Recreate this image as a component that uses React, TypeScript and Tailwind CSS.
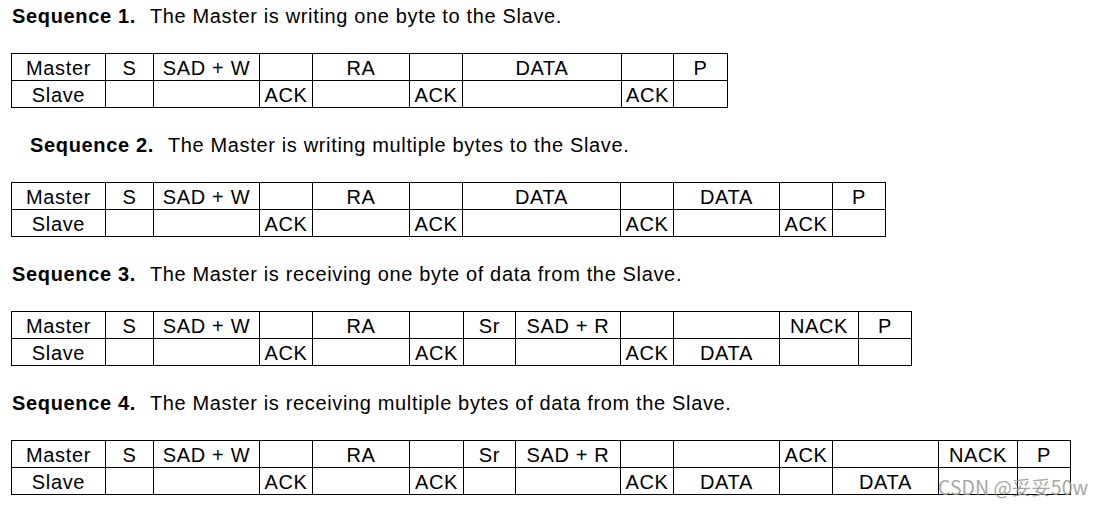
import React from 'react'

type Col = [number, string, string]

interface Seq {
  n: number
  title: string
  indent: string
  cols: Col[]
}

const SEQUENCES: Seq[] = [
  {
    n: 1,
    title: 'The Master is writing one byte to the Slave.',
    indent: 'pl-[12px]',
    cols: [
      [94, 'Master', 'Slave'],
      [48, 'S', ''],
      [106, 'SAD + W', ''],
      [53, '', 'ACK'],
      [97, 'RA', ''],
      [53, '', 'ACK'],
      [159, 'DATA', ''],
      [52, '', 'ACK'],
      [54, 'P', ''],
    ],
  },
  {
    n: 2,
    title: 'The Master is writing multiple bytes to the Slave.',
    indent: 'pl-[30px]',
    cols: [
      [94, 'Master', 'Slave'],
      [48, 'S', ''],
      [106, 'SAD + W', ''],
      [53, '', 'ACK'],
      [97, 'RA', ''],
      [53, '', 'ACK'],
      [158, 'DATA', ''],
      [53, '', 'ACK'],
      [106, 'DATA', ''],
      [53, '', 'ACK'],
      [53, 'P', ''],
    ],
  },
  {
    n: 3,
    title: 'The Master is receiving one byte of data from the Slave.',
    indent: 'pl-[12px]',
    cols: [
      [94, 'Master', 'Slave'],
      [48, 'S', ''],
      [106, 'SAD + W', ''],
      [53, '', 'ACK'],
      [97, 'RA', ''],
      [54, '', 'ACK'],
      [52, 'Sr', ''],
      [105, 'SAD + R', ''],
      [53, '', 'ACK'],
      [106, '', 'DATA'],
      [79, 'NACK', ''],
      [53, 'P', ''],
    ],
  },
  {
    n: 4,
    title: 'The Master is receiving multiple bytes of data from the Slave.',
    indent: 'pl-[12px]',
    cols: [
      [94, 'Master', 'Slave'],
      [48, 'S', ''],
      [106, 'SAD + W', ''],
      [53, '', 'ACK'],
      [97, 'RA', ''],
      [54, '', 'ACK'],
      [52, 'Sr', ''],
      [105, 'SAD + R', ''],
      [53, '', 'ACK'],
      [106, '', 'DATA'],
      [53, 'ACK', ''],
      [106, '', 'DATA'],
      [79, 'NACK', ''],
      [53, 'P', ''],
    ],
  },
]

function SeqTable({ cols }: { cols: Col[] }) {
  return (
    <div className="inline-flex flex-col self-start border-r border-b border-black">
      {[1, 2].map((row) => (
        <div key={row} className="flex h-[27px]">
          {cols.map(([w, master, slave], i) => (
            <div
              key={i}
              style={{ width: w }}
              className="box-border border-l border-t border-black text-center leading-[28px] whitespace-nowrap overflow-visible"
            >
              {row === 1 ? master : slave}
            </div>
          ))}
        </div>
      ))}
    </div>
  )
}

export default function App() {
  return (
    <div className="relative w-[1106px] h-[506px] overflow-hidden bg-white text-black font-['Liberation_Sans',Arial,sans-serif] text-[20px] tracking-[0.65px]">
      <div className="flex flex-col pl-[11px] pt-[4px]">
        {SEQUENCES.map((seq, idx) => (
          <div key={seq.n} className={`flex flex-col ${idx > 0 ? 'mt-[25px]' : ''}`}>
            <div className={`h-[24px] leading-[24px] whitespace-nowrap ${seq.indent} -ml-[11px]`}>
              <span className="font-bold">Sequence {seq.n}.</span>
              <span className="ml-[14px]">{seq.title}</span>
            </div>
            <div className="mt-[25px] flex">
              <SeqTable cols={seq.cols} />
            </div>
          </div>
        ))}
      </div>
      <div className="absolute left-[938px] top-[476px] text-[19.5px] leading-[22px] tracking-normal text-[#9a9a9a]/90 font-['Noto_Sans_CJK_SC','Noto_Sans',sans-serif] whitespace-nowrap">
        CSDN @妥妥50w
      </div>
    </div>
  )
}
